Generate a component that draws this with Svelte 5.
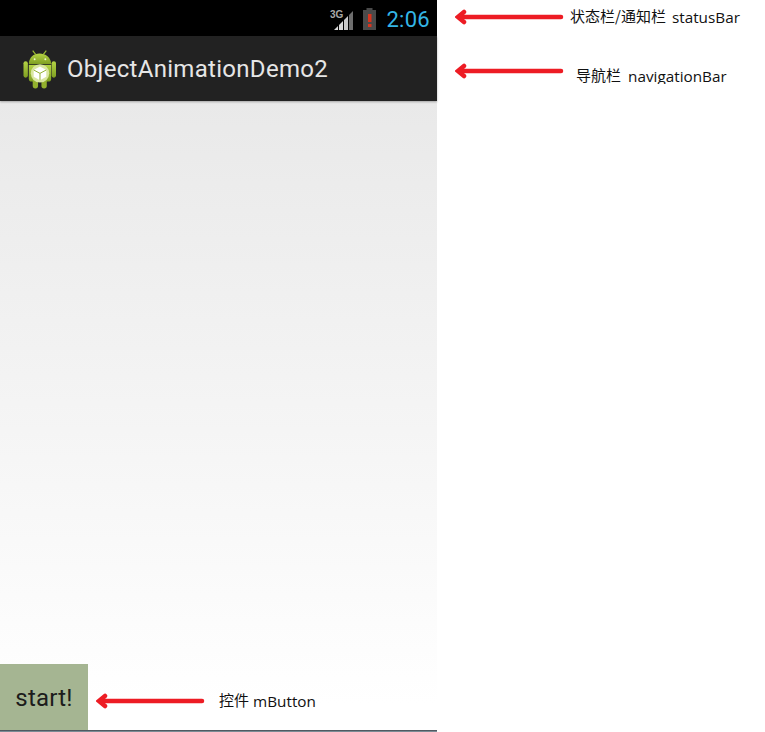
<script lang="ts">
  // annotations sit on a free canvas next to the phone, so they carry their own coordinates
  const arrows = [
    { x: 455, y: 17, length: 105 },
    { x: 455, y: 71, length: 105 },
    { x: 96, y: 701, length: 105 },
  ];
  const notes = [
    { x: 570, y: 6, cn: "状态栏/通知栏", gap: 6, en: "statusBar" },
    { x: 576, y: 65, cn: "导航栏", gap: 7, en: "navigationBar", clipped: true },
    { x: 219, y: 690, cn: "控件", gap: 4, en: "mButton" },
  ];
</script>

<div class="screen">
  <div class="phone">
    <header class="status-bar">
      <svg class="signal" width="26" height="24" viewBox="0 0 26 24">
        <text x="1" y="11" class="three-g">3G</text>
        <path d="M24 4v19h-4V8z" fill="#6e6e6e" />
        <path d="M19 9v14h-4V13z" fill="#c8c8c8" />
        <path d="M14 14v9h-4v-5z" fill="#d8d8d8" />
        <path d="M9 19v4H5z" fill="#d8d8d8" />
      </svg>
      <svg class="battery" width="15" height="22" viewBox="0 0 15 22">
        <path d="M4.500 0h6v2h3.500v20H1V2h3.500z" fill="#4a4a4a" />
        <rect x="6" y="6" width="3.500" height="8" fill="#d8351f" />
        <rect x="6" y="16" width="3.500" height="3" fill="#d8351f" />
      </svg>
      <span class="clock">2:06</span>
    </header>
    <nav class="action-bar">
      <svg class="logo" width="33" height="40" viewBox="0 0 34 40">
        <defs>
          <linearGradient id="droid" x1="0" y1="0" x2="0" y2="1">
            <stop offset="0" stop-color="#b4d345" />
            <stop offset="1" stop-color="#7f9f22" />
          </linearGradient>
        </defs>
        <path d="M10 1l3 4M24 1l-3 4" stroke="#9dbd34" stroke-width="1.200" />
        <path d="M6 15c0-7 5-11 11-11s12 4 12 11z" fill="url(#droid)" />
        <path d="M6 16h23v14c0 2-1 3-3 3H9c-2 0-3-1-3-3z" fill="url(#droid)" />
        <rect x="0.500" y="12" width="4.500" height="17" rx="2.200" fill="url(#droid)" />
        <rect x="29.500" y="12" width="4.500" height="17" rx="2.200" fill="url(#droid)" />
        <rect x="10" y="30" width="5.500" height="10" rx="2.700" fill="#93b12d" />
        <rect x="19" y="30" width="5.500" height="10" rx="2.700" fill="#93b12d" />
        <circle cx="12" cy="10" r="1" fill="#eef2d0" />
        <circle cx="23" cy="10" r="1" fill="#eef2d0" />
        <circle cx="17.500" cy="24.500" r="9.500" fill="#d9e6a0" />
        <path d="M17.500 17.500l6.500 3.500v7l-6.500 3.500L11 28v-7z" fill="#fff" />
        <path d="M11 21l6.500 3.500L24 21M17.500 24.500v7" fill="none" stroke="#8fae2c" stroke-width="1" />
      </svg>
      <span class="title">ObjectAnimationDemo2</span>
    </nav>
    <main class="content">
      <button class="start"><span>start!</span></button>
    </main>
    <div class="bottom-edge"></div>
  </div>

  {#each arrows as arrow}
    <svg
      class="arrow"
      width={arrow.length + 4}
      height="16"
      viewBox="0 0 {arrow.length + 4} 16"
      style="left: {arrow.x}px; top: {arrow.y - 8}px"
    >
      <path d="M4 8H{arrow.length + 1}" stroke="#ed1c24" stroke-width="4.500" stroke-linecap="round" />
      <path d="M9 3L3 8l6 5" fill="none" stroke="#ed1c24" stroke-width="4.500" stroke-linecap="round" />
    </svg>
  {/each}

  {#each notes as note}
    <div class="note" style="left: {note.x}px; top: {note.y}px">
      <span>{note.cn}</span><span
        class="latin"
        class:clipped={note.clipped}
        style="margin-left: {note.gap}px">{note.en}</span
      >
    </div>
  {/each}
</div>

<style>
  :global(body) {
    background: #fff;
  }

  .screen {
    position: relative;
    width: 765px;
    height: 732px;
    overflow: hidden;
    background: #fff;
  }

  .phone {
    display: flex;
    flex-direction: column;
    width: 437px;
    height: 732px;
    font-family: Roboto, sans-serif;
  }

  .status-bar {
    display: flex;
    align-items: center;
    justify-content: flex-end;
    flex: 0 0 36px;
    padding: 2px 7px 0 0;
    box-sizing: border-box;
    background: #000;
  }

  .signal {
    margin-right: 7px;
  }

  .three-g {
    font-family: "Liberation Sans", sans-serif;
    font-size: 10px;
    font-weight: 700;
    fill: #a8a8a8;
  }

  .battery {
    margin-right: 9px;
  }

  .clock {
    font-size: 22px;
    color: #33b5e5;
    letter-spacing: 0.300px;
  }

  .action-bar {
    display: flex;
    align-items: center;
    flex: 0 0 65px;
    padding-left: 23px;
    box-sizing: border-box;
    background: #222;
    box-shadow: 0 1px 2px rgba(0, 0, 0, 0.3);
    z-index: 1;
  }

  .logo {
    margin-right: 11px;
  }

  .title {
    font-size: 24px;
    color: #e6e6e6;
    letter-spacing: 0.300px;
  }

  .content {
    display: flex;
    align-items: flex-end;
    flex: 1;
    background: linear-gradient(#e9e9e9, #fff 96%);
  }

  .start {
    width: 88px;
    height: 66px;
    padding: 2px 0 0;
    border: 0;
    border-radius: 0;
    background: #a5b592;
    color: #1c1c1c;
    font-family: Roboto, sans-serif;
    font-size: 24px;
    letter-spacing: 0.200px;
  }

  .bottom-edge {
    flex: 0 0 2px;
    background: linear-gradient(#3c4148, #8fa3ad);
  }

  .arrow {
    position: absolute;
  }

  .note {
    position: absolute;
    display: flex;
    align-items: flex-start;
    font-family: "Noto Sans CJK SC", sans-serif;
    font-size: 15px;
    line-height: 20px;
    color: #111;
    white-space: nowrap;
  }

  .latin {
    margin-top: 1px;
    font-family: "Open Sans", sans-serif;
    font-size: 15.300px;
  }

  .latin.clipped {
    clip-path: inset(0 0 2px 0);
  }
</style>
